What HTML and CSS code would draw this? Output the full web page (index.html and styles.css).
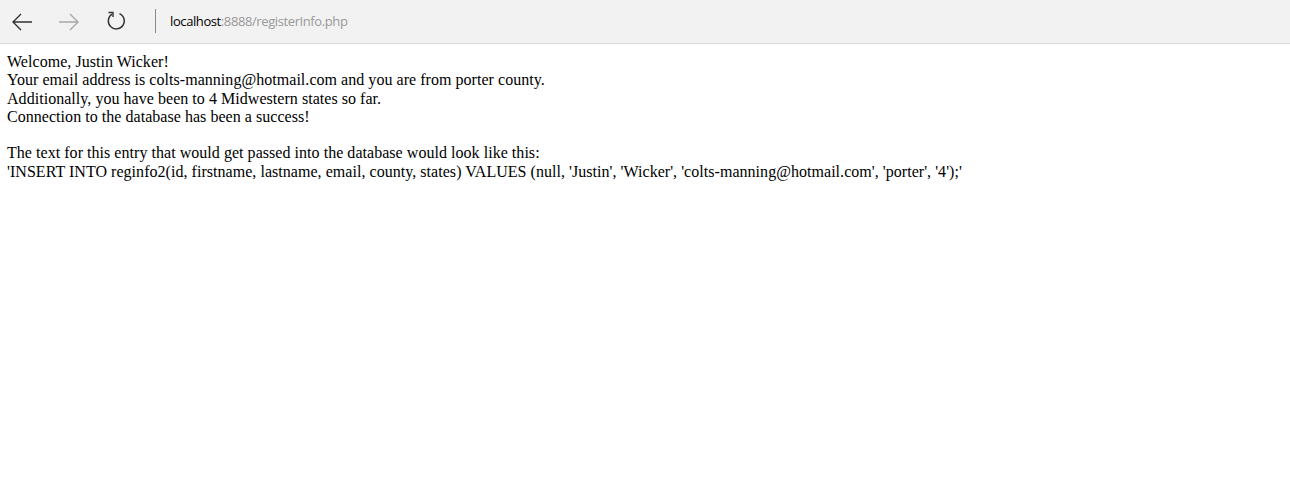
FILE: index.html
```html
<!DOCTYPE html>
<html>
<head>
<meta charset="utf-8">
<title>registerInfo.php</title>
<link rel="stylesheet" href="styles.css">
</head>
<body>
<div class="toolbar">
  <div class="nav">
    <svg class="icon back" width="22" height="20" viewBox="0 0 22 20"><path d="M21 10H2M10 2L2 10l8 8" fill="none" stroke="#333" stroke-width="1.4"/></svg>
    <svg class="icon fwd" width="22" height="20" viewBox="0 0 22 20"><path d="M1 10h19M12 2l8 8-8 8" fill="none" stroke="#a8a8a8" stroke-width="1.4"/></svg>
    <svg class="icon refresh" width="22" height="22" viewBox="0 0 22 22"><path d="M7 4.2A8 8 0 1 0 14.5 3.6" fill="none" stroke="#333" stroke-width="1.4"/><path d="M3.5 2.5H8v4.6" fill="none" stroke="#333" stroke-width="1.4"/></svg>
  </div>
  <div class="sep"></div>
  <div class="url"><span class="host">localhost</span>:8888/registerInfo.php</div>
</div>
<div class="page">
Welcome, Justin Wicker!<br>
Your email address is colts-manning@hotmail.com and you are from porter county.<br>
Additionally, you have been to 4 Midwestern states so far.<br>
Connection to the database has been a success!<br>
<br>
The text for this entry that would get passed into the database would look like this:<br>
'INSERT INTO reginfo2(id, firstname, lastname, email, county, states) VALUES (null, 'Justin', 'Wicker', 'colts-manning@hotmail.com', 'porter', '4');'
</div>
</body>
</html>
```
FILE: styles.css
```css
html, body {
  margin: 0;
  padding: 0;
  background: #fff;
}
.toolbar {
  height: 43px;
  background: #f2f2f2;
  border-bottom: 1px solid #d9d9d9;
  display: flex;
  align-items: center;
  font-family: "Open Sans", "Noto Sans", sans-serif;
}
.nav {
  display: flex;
  align-items: center;
  padding-left: 11px;
}
.icon { display: block; }
.back { margin-right: 25px; }
.fwd { margin-right: 25px; }
.refresh { margin-top: -1px; }
.sep {
  width: 1px;
  height: 24px;
  background: #8a8a8a;
  margin-left: 28px;
  margin-right: 14px;
  margin-top: -2px;
}
.url {
  font-size: 13px;
  color: #999;
  margin-top: -2px;
  letter-spacing: -0.4px;
}
.url .host { color: #000; }
.page {
  margin: 9px 8px 8px 7px;
  font-family: "Liberation Serif", "Times New Roman", serif;
  font-size: 16px;
  line-height: 18.3px;
  letter-spacing: 0.04px;
  color: #000;
}
```
